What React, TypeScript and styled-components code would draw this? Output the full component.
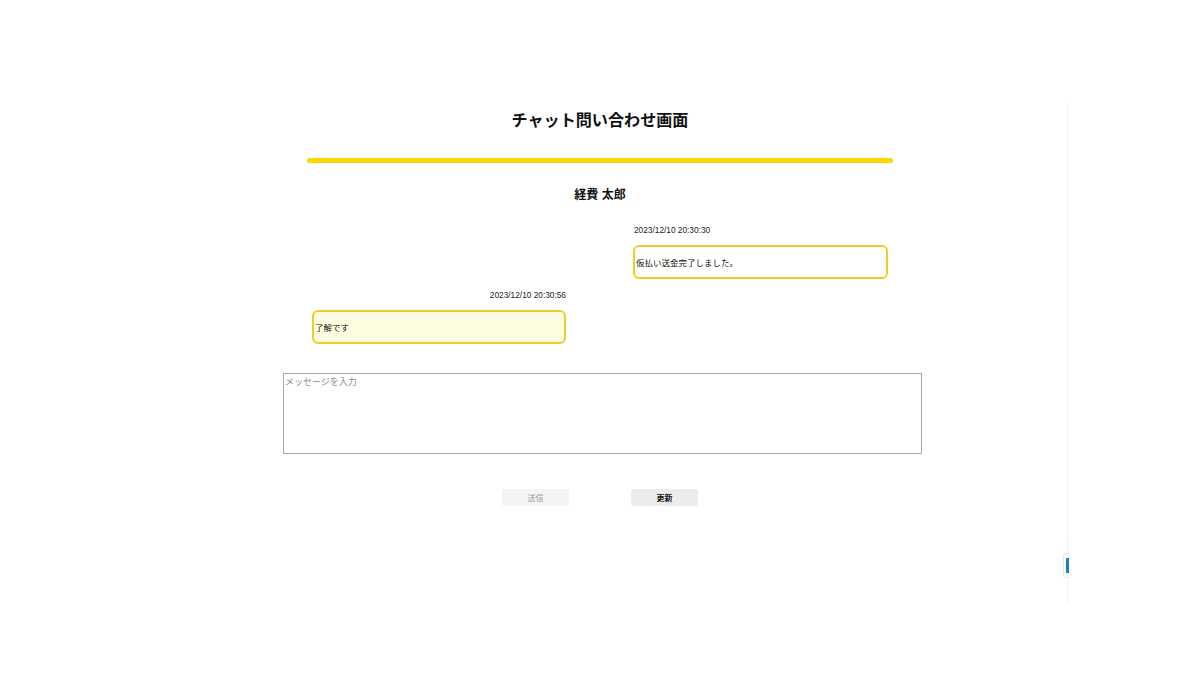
import React from "react";
import styled, { createGlobalStyle } from "styled-components";

const Global = createGlobalStyle`
  html, body { margin: 0; padding: 0; background: #fff; }
  body { font-family: "Liberation Sans", "Noto Sans CJK JP", sans-serif; color: #111; }
`;

const Page = styled.div`
  position: relative;
  width: 1200px;
  height: 680px;
  overflow: hidden;
  padding-top: 103px;
  box-sizing: border-box;
`;

const Frame = styled.div`
  width: 1068px;
  height: 502px;
  box-sizing: border-box;
  border-right: 1px solid #f1f1f1;
`;

const Column = styled.div`
  width: 640px;
  margin-left: 280px;
  display: flex;
  flex-direction: column;
`;

const Title = styled.h1`
  margin: 0;
  font-size: 16.1px;
  line-height: 34px;
  font-weight: 700;
  text-align: center;
`;

const Bar = styled.div`
  margin: 21px 27px 0;
  height: 5px;
  border-radius: 3px;
  background: #f9d700;
`;

const Name = styled.div`
  margin-top: 22px;
  font-size: 12px;
  line-height: 20px;
  font-weight: 700;
  text-align: center;
`;

const Chat = styled.div`
  margin: 18px 27px 0;
  display: flex;
  flex-direction: column;
  gap: 9px;
`;

const Message = styled.div<{ $mine: boolean }>`
  width: ${(p) => (p.$mine ? "255px" : "254px")};
  display: flex;
  flex-direction: column;
  align-self: ${(p) => (p.$mine ? "flex-end" : "flex-start")};
  align-items: ${(p) => (p.$mine ? "flex-start" : "flex-end")};
  margin: ${(p) => (p.$mine ? "0 5px 0 0" : "0 0 0 5px")};
`;

const Stamp = styled.div<{ $mine: boolean }>`
  font-size: 8.3px;
  line-height: 14px;
  color: #222;
  padding: ${(p) => (p.$mine ? "0 0 0 1px" : "0")};
`;

const Bubble = styled.div<{ $mine: boolean }>`
  margin-top: 8px;
  width: 100%;
  height: 34px;
  box-sizing: border-box;
  border: 2px solid #f0cc2a;
  border-radius: 6px;
  background: ${(p) => (p.$mine ? "#fffffe" : "#fffde1")};
  display: flex;
  align-items: center;
  padding-left: 1px;
  font-size: 8.5px;
  color: #111;
`;

const Input = styled.textarea`
  margin: 29px 0 0 3px;
  width: 639px;
  height: 81px;
  box-sizing: border-box;
  border: 1px solid #a9a9a9;
  padding: 1px 1px;
  font-family: "Liberation Sans", "Noto Sans CJK JP", sans-serif;
  font-size: 9px;
  resize: none;
  outline: none;
  &::placeholder { color: #8e8e8e; }
`;

const Actions = styled.div`
  margin-top: 35px;
  display: flex;
  justify-content: center;
  gap: 62px;
`;

const Button = styled.button<{ $disabled?: boolean }>`
  width: 67px;
  height: 17px;
  border: none;
  border-radius: 2px;
  padding: 0;
  font-family: "Liberation Sans", "Noto Sans CJK JP", sans-serif;
  font-size: 8px;
  font-weight: ${(p) => (p.$disabled ? 400 : 700)};
  background: ${(p) => (p.$disabled ? "#f4f4f4" : "#ececec")};
  color: ${(p) => (p.$disabled ? "#9a9a9a" : "#111")};
`;

const SideTab = styled.div`
  position: absolute;
  left: 1063px;
  top: 553px;
  width: 6px;
  height: 25px;
  box-sizing: border-box;
  border: 1px solid #e6e6e6;
  border-right: none;
  border-radius: 3px 0 0 3px;
  background: #fff;
  display: flex;
  align-items: center;
  justify-content: flex-end;
`;

const TabMark = styled.div`
  width: 3px;
  height: 15px;
  background: #1a7fc8;
`;

const messages = [
  { mine: true, time: "2023/12/10 20:30:30", text: "仮払い送金完了しました。" },
  { mine: false, time: "2023/12/10 20:30:56", text: "了解です" },
];

export default function App() {
  return (
    <Page>
      <Global />
      <Frame>
        <Column>
          <Title>チャット問い合わせ画面</Title>
          <Bar />
          <Name>経費 太郎</Name>
          <Chat>
            {messages.map((m, i) => (
              <Message key={i} $mine={m.mine}>
                <Stamp $mine={m.mine}>{m.time}</Stamp>
                <Bubble $mine={m.mine}>{m.text}</Bubble>
              </Message>
            ))}
          </Chat>
          <Input placeholder="メッセージを入力" />
          <Actions>
            <Button $disabled disabled>送信</Button>
            <Button>更新</Button>
          </Actions>
        </Column>
      </Frame>
      <SideTab>
        <TabMark />
      </SideTab>
    </Page>
  );
}
